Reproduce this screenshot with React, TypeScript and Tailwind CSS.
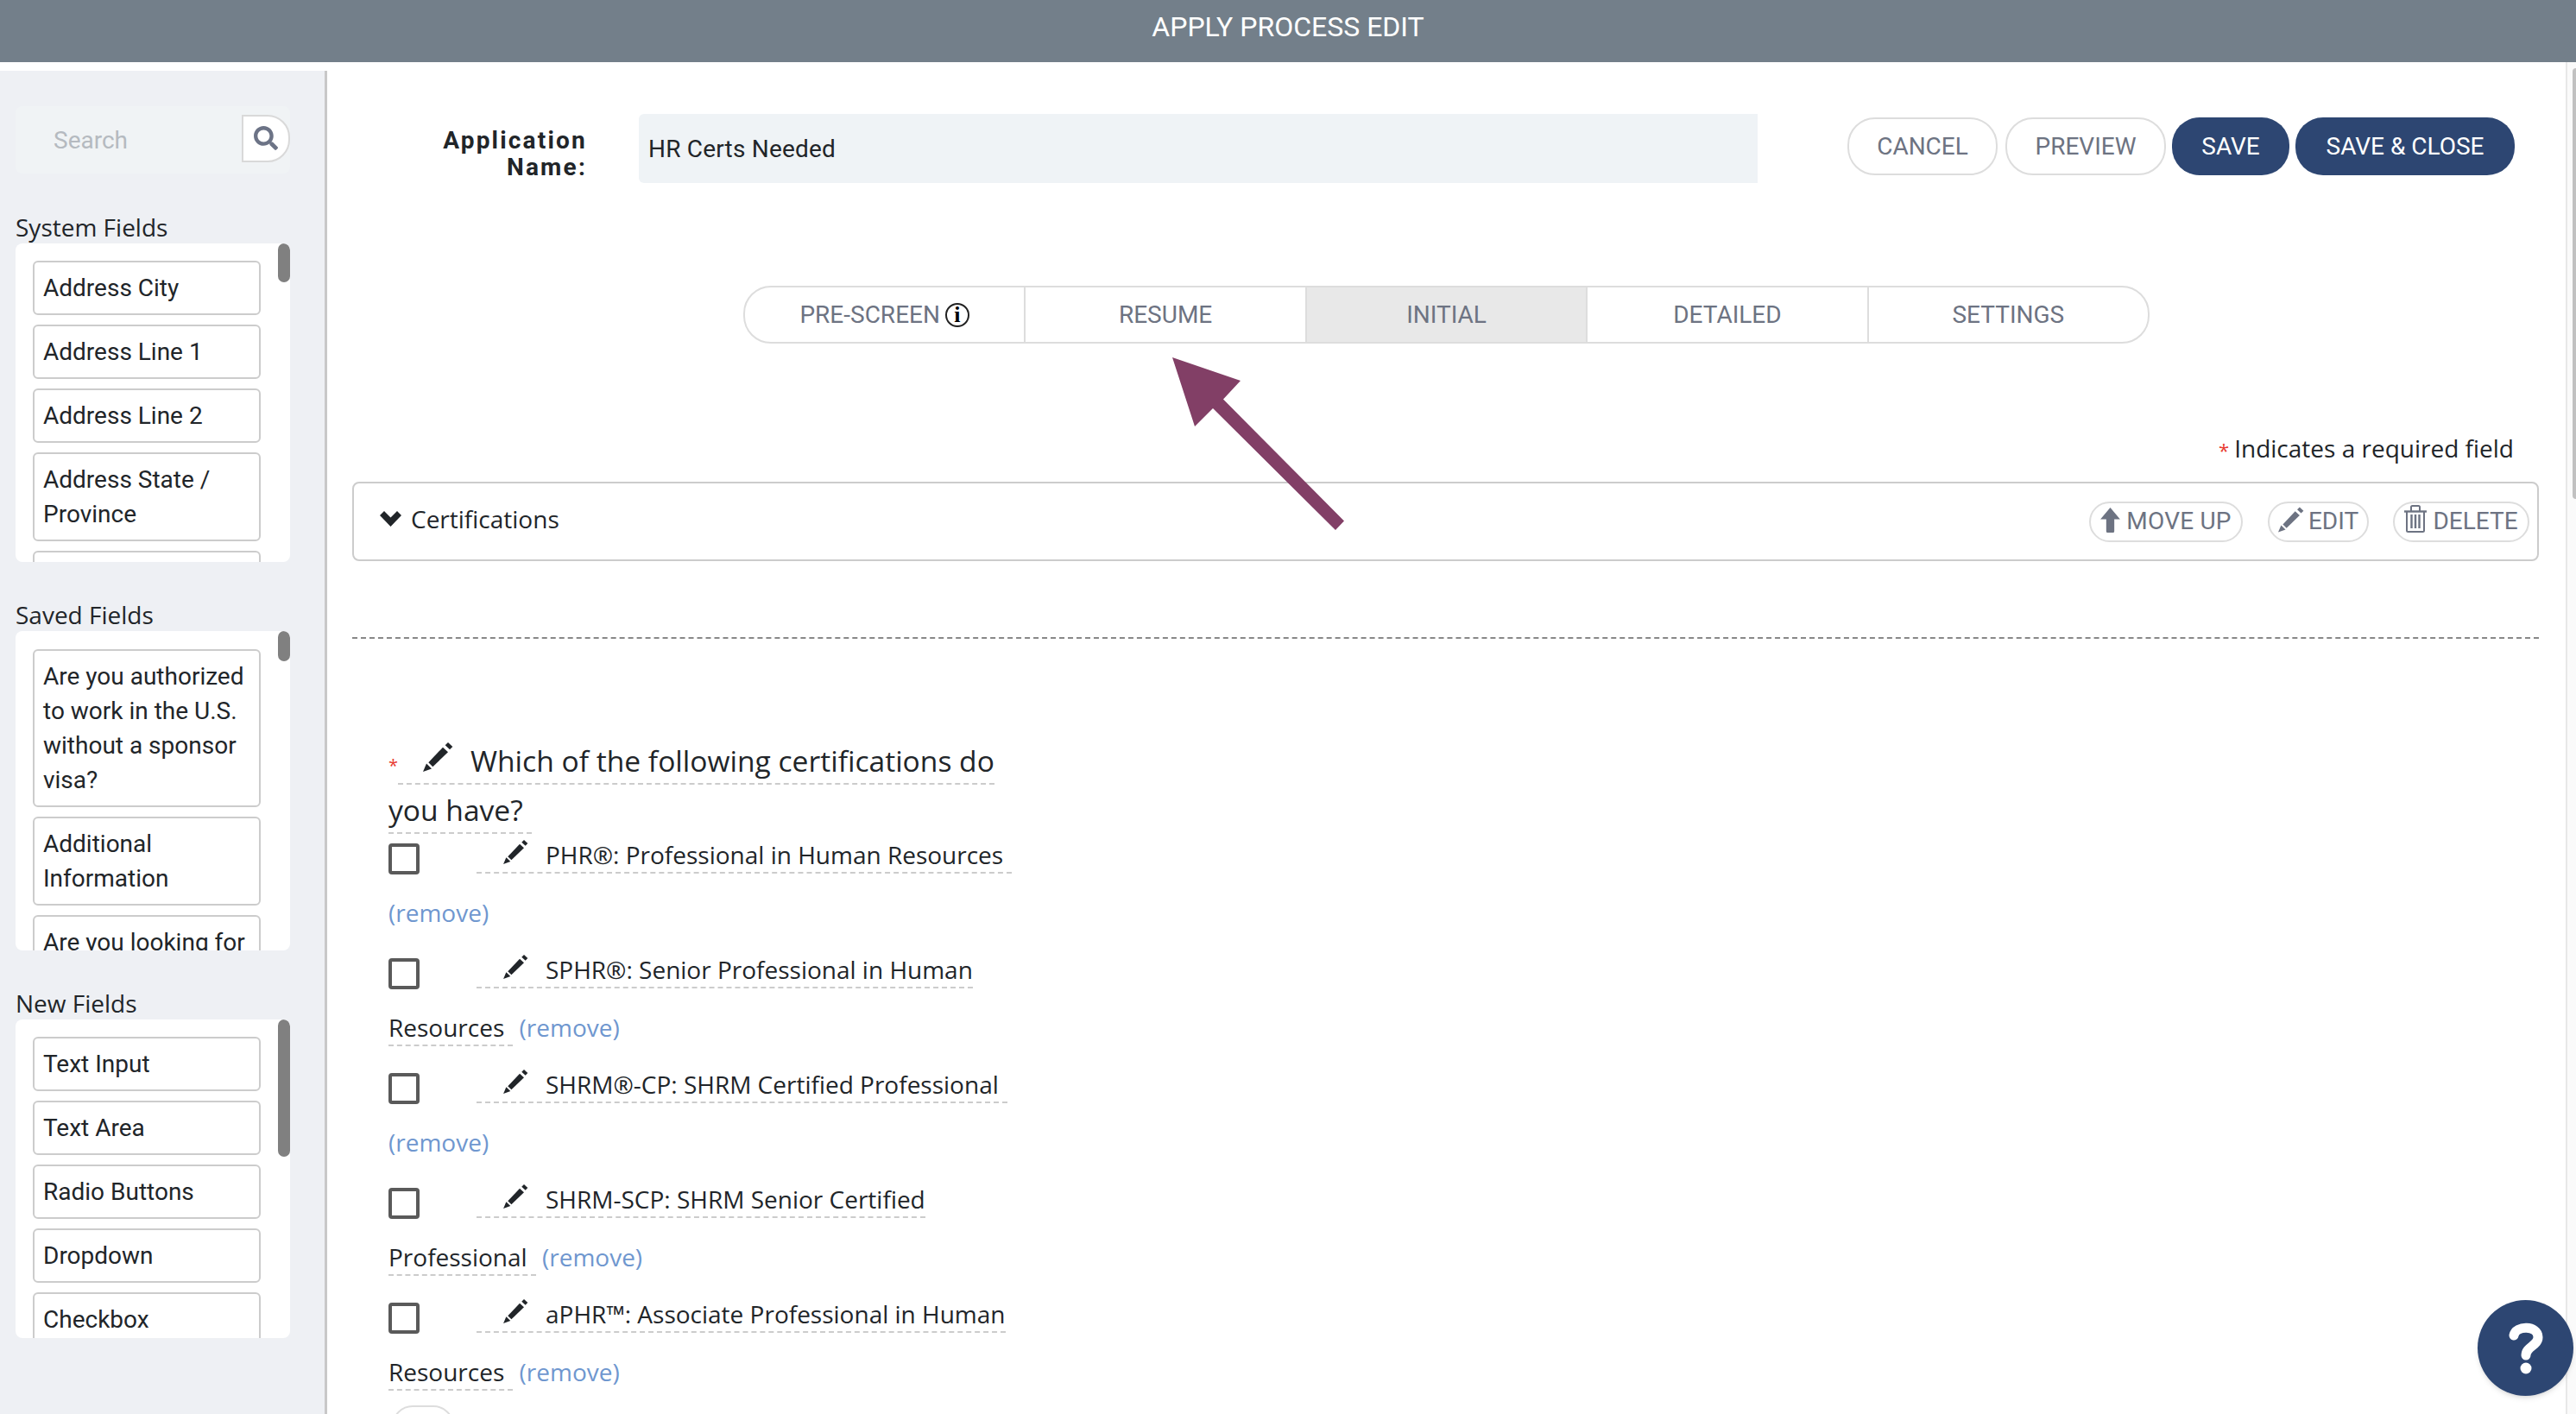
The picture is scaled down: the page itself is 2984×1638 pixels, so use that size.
import React from "react";
import { FaSearch } from "react-icons/fa";

function Pencil({ className }: { className: string }) {
  return (
    <svg viewBox="0 0 35 34" className={className} fill="currentColor">
      <path d="M6.3 23.3 23 5.7 29 11.3 11.3 28.3Z" />
      <path d="M25.7 3.3 29 0 34.3 5 31 8.3Z" />
      <path d="M0 34 4 24.5 10 30.5Z" />
    </svg>
  );
}

function ArrowUp({ className }: { className: string }) {
  return (
    <svg viewBox="0 0 22 28" className={className} fill="currentColor">
      <path d="M11 0 22 13H15.5V26.5Q15.5 28 14 28H8Q6.5 28 6.5 26.5V13H0Z" />
    </svg>
  );
}

function Trash({ className }: { className: string }) {
  return (
    <svg viewBox="0 0 26 32" className={className} fill="none" stroke="currentColor" strokeWidth="2">
      <path d="M0 7.5H26" strokeWidth="2.4" />
      <path d="M8 7V2.5Q8 1 9.5 1H16.5Q18 1 18 2.5V7" />
      <path d="M3 8V29.5Q3 31 4.5 31H21.5Q23 31 23 29.5V8" />
      <path d="M8.5 11V27M13 11V27M17.5 11V27" strokeWidth="2.4" />
    </svg>
  );
}

function FieldList({ items, thumb, box }: { items: string[]; thumb: string; box: string }) {
  return (
    <div className={`relative w-[318px] overflow-hidden rounded-lg bg-white pl-[20px] ${box}`}>
      <div className="flex w-[264px] flex-col gap-[11px]">
        {items.map((t) => (
          <div
            key={t}
            className="rounded-md border-2 border-[#cccccc] bg-white pb-[9px] pl-[10px] pr-[6px] pt-[10px] text-[28px] leading-[40px] text-[#212529]"
          >
            {t}
          </div>
        ))}
      </div>
      <div className={`absolute right-0 top-0 w-[14px] rounded-lg bg-[#808080] ${thumb}`} />
    </div>
  );
}

function SideLabel({ children }: { children: React.ReactNode }) {
  return <div className="h-[39px] font-['Open_Sans'] text-[28px] leading-[40px] text-[#212529]">{children}</div>;
}

function Row({ first, rest }: { first: string; rest?: string }) {
  return (
    <div className="h-[133px] font-['Open_Sans'] text-[28px] leading-[66.5px] text-[#212529]">
      <span className="mr-[66px] inline-block size-[36px] rounded-[4px] border-[4px] border-[#5a5a5a] bg-white align-[-12px]" />
      <span className="border-b-2 border-dashed border-[#cccccc] pb-[1px] pl-[31px] pr-[10px]">
        <Pencil className="mr-[20px] inline-block h-[28px] w-[29px] align-[0px] text-[#212529]" />
        {first}
        {rest ? " " + rest : ""}
      </span>{" "}
      <span className="text-[#6f97cf]">(remove)</span>
    </div>
  );
}

export default function App() {
  const tabs = ["RESUME", "INITIAL", "DETAILED", "SETTINGS"];
  return (
    <div className="relative flex h-[1638px] w-[2984px] flex-col overflow-hidden bg-white font-['Roboto'] text-[#212529]">
      <header className="flex h-[72px] shrink-0 items-center justify-center bg-[#737f8a] pb-[11px] text-[32px] text-white">
        APPLY PROCESS EDIT
      </header>
      <div className="flex min-h-0 flex-1">
        <aside className="mt-[10px] w-[379px] shrink-0 border-r-[3px] border-[#c8c8c8] bg-[#eef0f4] pl-[18px] pt-[41px]">
          <div className="mb-[42px] flex h-[78px] w-[318px] items-center rounded-lg bg-[#f0f3f5]">
            <div className="w-[262px] pl-[44px] pt-[1px] text-[28px] text-[#b5bac0]">Search</div>
            <div className="flex h-[55px] w-[56px] -translate-y-[2px] items-center justify-center rounded-r-[26px] border-2 border-[#d9d9d9] bg-white">
              <FaSearch className="size-[28px] text-[#6c7386]" />
            </div>
          </div>
          <SideLabel>System Fields</SideLabel>
          <FieldList box="h-[369px] pt-[20px]" thumb="h-[45px]" items={["Address City", "Address Line 1", "Address Line 2", "Address State / Province", "Address Zip"]} />
          <div className="h-[41px]" />
          <SideLabel>Saved Fields</SideLabel>
          <FieldList
            box="h-[370px] pt-[21px]"
            thumb="h-[35px]"
            items={["Are you authorized to work in the U.S. without a sponsor visa?", "Additional Information", "Are you looking for"]}
          />
          <div className="h-[41px]" />
          <SideLabel>New Fields</SideLabel>
          <FieldList box="h-[369px] pt-[20px]" thumb="h-[159px]" items={["Text Input", "Text Area", "Radio Buttons", "Dropdown", "Checkbox"]} />
        </aside>

        <main className="min-w-0 flex-1 pt-[60px]">
          <div className="flex items-start">
            <div className="w-[301px] pt-[15px] text-right text-[28px] font-bold leading-[31px] tracking-[2.2px]">
              Application
              <br />
              Name:
            </div>
            <div className="ml-[60px] flex h-[80px] w-[1296px] items-center rounded-l-md bg-[#eff3f6] pl-[11px] pt-[1px] text-[28px] tracking-[0.2px]">
              HR Certs Needed
            </div>
            <div className="ml-[104px] mt-[4px] flex text-[28px]">
              <button className="h-[67px] w-[174px] rounded-[32px] border-2 border-[#dddddd] text-[#6d7382]">CANCEL</button>
              <button className="ml-[9px] h-[67px] w-[186px] rounded-[32px] border-2 border-[#dddddd] text-[#6d7382]">PREVIEW</button>
              <button className="ml-[7px] h-[67px] w-[136px] rounded-[32px] bg-[#2d4672] text-white">SAVE</button>
              <button className="ml-[7px] h-[67px] w-[254px] rounded-[32px] bg-[#2d4672] text-white">SAVE &amp; CLOSE</button>
            </div>
          </div>

          <div className="ml-[482px] mt-[119px] flex h-[67px] w-[1629px] overflow-hidden rounded-[32px] border-2 border-[#dddddd] text-[28px] text-[#6d7382]">
            <div className="flex flex-1 items-center justify-center gap-[6px] border-r-2 border-[#dddddd]">
              PRE-SCREEN
              <span className="flex size-[28px] items-center justify-center rounded-full border-2 border-[#222222] font-['Liberation_Serif'] text-[26px] font-bold leading-none text-black">
                i
              </span>
            </div>
            {tabs.map((t, i) => (
              <div
                key={t}
                className={
                  i === 1
                    ? "flex flex-1 items-center justify-center border-r-2 border-[#dddddd] bg-[#e8e8e8]"
                    : i === 3
                      ? "flex flex-1 items-center justify-center"
                      : "flex flex-1 items-center justify-center border-r-2 border-[#dddddd]"
                }
              >
                {t}
              </div>
            ))}
          </div>

          <div className="mt-[101px] h-[40px] pr-[60px] text-right font-['Open_Sans'] text-[28px] leading-[40px]">
            <span className="mr-[6px] text-[22px] text-[#e8392f]">*</span>
            Indicates a required field
          </div>

          <div className="ml-[29px] mr-[31px] mt-[19px] flex h-[92px] items-center justify-between rounded-lg border-2 border-[#cccccc] pl-[30px] pr-[9px]">
            <div className="flex items-center gap-[11px] pb-[6px] font-['Open_Sans'] text-[28px]">
              <svg viewBox="0 0 25 18" className="h-[18px] w-[25px]" fill="#212529">
                <path d="M0 5 5 0 12.5 7.5 20 0 25 5 12.5 18Z" />
              </svg>
              Certifications
            </div>
            <div className="flex text-[28px] text-[#6d7382]">
              <div className="flex h-[47px] w-[178px] items-center justify-center gap-[7px] rounded-[24px] border-2 border-[#dddddd] tracking-[0.2px]">
                <ArrowUp className="h-[29px] w-[23px] -translate-y-[2px]" />
                MOVE UP
              </div>
              <div className="ml-[29px] flex h-[47px] w-[117px] items-center justify-center gap-[5px] rounded-[24px] border-2 border-[#dddddd]">
                <Pencil className="h-[30px] w-[30px] -translate-y-[2px]" />
                EDIT
              </div>
              <div className="ml-[28px] flex h-[47px] w-[158px] items-center justify-center gap-[7px] rounded-[24px] border-2 border-[#dddddd]">
                <Trash className="h-[32px] w-[26px] -translate-y-[3px]" />
                DELETE
              </div>
            </div>
          </div>

          <div className="ml-[29px] mr-[31px] mt-[88px] border-t-2 border-dashed border-[#888888]" />

          <div className="ml-[71px] mt-[113px] w-[730px]">
            <div className="h-[104px] font-['Open_Sans'] text-[33.6px] leading-[57px] text-[#212529]">
              <span className="text-[20px] leading-none text-[#e8392f]">*</span>
              <span className="border-b-2 border-dashed border-[#cccccc] pb-[3px] pl-[29px] pr-[10px]">
                <Pencil className="mr-[20px] inline-block h-[34px] w-[35px] align-[0px]" />
                Which of the following certifications do you have?
              </span>
            </div>
            <Row first="PHR®: Professional in Human Resources" />
            <Row first="SPHR®: Senior Professional in Human" rest="Resources" />
            <Row first="SHRM®-CP: SHRM Certified Professional" />
            <Row first="SHRM-SCP: SHRM Senior Certified" rest="Professional" />
            <Row first="aPHR™: Associate Professional in Human" rest="Resources" />
            <div className="ml-[4px] mt-[6px] h-[60px] w-[72px] rounded-[24px] border-2 border-[#dddddd]" />
          </div>
        </main>

        <div className="w-[12px] shrink-0 border-l-2 border-[#e8e8e8] bg-[#fafafa] pl-[6px] pt-[7px]">
          <div className="h-[499px] w-[4px] rounded-l-[4px] bg-[#c1c1c1]" />
        </div>
      </div>

      <svg viewBox="1340 400 230 220" className="absolute left-[1340px] top-[400px] h-[220px] w-[230px]" fill="#823f66">
        <path d="M1358 414 1437 441 1417 462.5 1557 603.6 1547 614 1405 473 1384 494Z" />
      </svg>

      <div className="absolute left-[2870px] top-[1506px] flex size-[111px] items-center justify-center rounded-full bg-[#2d4672] shadow-md">
        <svg viewBox="0 0 40 60" className="h-[60px] w-[40px]" fill="none" stroke="white" strokeWidth="11" strokeLinecap="round">
          <path d="M6 15C8 3 34 3 34 17C34 27 20 28 20 38" />
          <circle cx="20" cy="53" r="6.5" fill="white" stroke="none" />
        </svg>
      </div>
    </div>
  );
}
